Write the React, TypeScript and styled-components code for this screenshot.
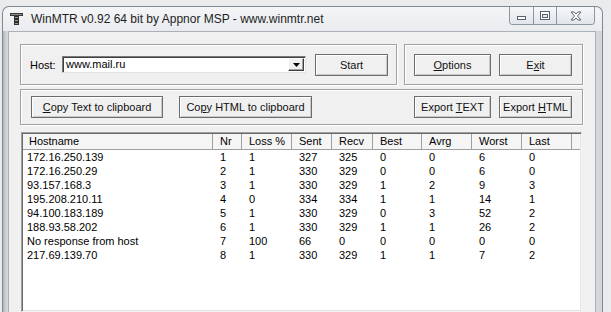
import React from "react";
import styled, { createGlobalStyle } from "styled-components";

const GlobalStyle = createGlobalStyle`
  html, body {
    margin: 0;
    padding: 0;
    background: #e9ebed;
    overflow: hidden;
  }
  body {
    font-family: "Liberation Sans", Arial, sans-serif;
    font-size: 11px;
    color: #000;
  }
  * {
    box-sizing: border-box;
  }
`;

const Window = styled.div`
  margin: 6px 0 0 2px;
  width: 601px;
  height: 306px;
  border: 1px solid #7f8994;
  border-bottom: none;
  border-radius: 7px 7px 0 0;
  background: linear-gradient(#f4f5f7, #e6e9ec 30px);
  display: flex;
  flex-direction: column;
  overflow: hidden;
`;

const TitleBar = styled.div`
  height: 24px;
  flex-shrink: 0;
  display: flex;
  align-items: center;
  padding-left: 7px;
`;

const TitleText = styled.span`
  margin-left: 8px;
  font-size: 12px;
  color: #1e1e1e;
`;

const Caption = styled.div`
  display: flex;
  align-self: flex-start;
  margin-left: auto;
  margin-right: 7px;
  border: 1px solid #8b96a3;
  border-top: none;
  border-radius: 0 0 4px 4px;
  overflow: hidden;
`;

const CapButton = styled.div<{ $w: number }>`
  width: ${(p) => p.$w}px;
  height: 17px;
  display: flex;
  align-items: center;
  justify-content: center;
  background: linear-gradient(#f6f7f9, #e1e5ea);
  & + & {
    border-left: 1px solid #8b96a3;
  }
`;

const Frame = styled.div`
  flex: 1;
  min-height: 0;
  display: flex;
  padding: 0 6px 0 5px;
  background: linear-gradient(
    to right,
    #b4b6b9 0px,
    #cfd1d4 3px,
    #dcdee1 6px,
    #e3e5e8 50%,
    #d3d5d8 100%
  );
`;

const Client = styled.div`
  flex: 1;
  background: #f0f0f0;
  border: 1px solid #aab1b9;
  border-bottom: none;
  padding: 12px 0 0 11px;
`;

const Row = styled.div<{ $top?: number }>`
  display: flex;
  gap: 7px;
  margin-top: ${(p) => p.$top ?? 0}px;
`;

const Group = styled.div<{ $w: number; $h: number; $pad: number }>`
  width: ${(p) => p.$w}px;
  height: ${(p) => p.$h}px;
  display: flex;
  align-items: center;
  padding-left: ${(p) => p.$pad}px;
  border: 1px solid #a0a0a0;
  box-shadow: inset 1px 1px 0 #fff, 1px 1px 0 #fff;
`;

const Label = styled.span`
  width: 32px;
  font-size: 11px;
`;

const Combo = styled.div`
  width: 244px;
  height: 17px;
  display: flex;
  background: #fff;
  border: 1px solid;
  border-color: #7a7a7a #e3e3e3 #e3e3e3 #7a7a7a;
  box-shadow: inset 1px 1px 0 #404040;
`;

const ComboText = styled.span`
  flex: 1;
  padding: 1px 0 0 3px;
  line-height: 13px;
`;

const DropButton = styled.div`
  width: 16px;
  height: 13px;
  margin: 1px 1px 0 0;
  display: flex;
  align-items: center;
  justify-content: center;
  background: #f0f0f0;
  border: 1px solid;
  border-color: #fff #404040 #404040 #fff;
  box-shadow: inset -1px -1px 0 #a0a0a0;
`;

const Button = styled.button<{ $w: number; $gap?: number }>`
  width: ${(p) => p.$w}px;
  height: 22px;
  margin-left: ${(p) => p.$gap ?? 0}px;
  padding: 0;
  font: 11px "Liberation Sans", Arial, sans-serif;
  color: #111;
  background: #f0f0f0;
  border: 1px solid #6c6c6c;
  border-radius: 0;
  box-shadow: inset 1px 1px 0 #fff, inset -1px -1px 0 #c9c9c9;
  u {
    text-decoration: underline;
  }
`;

const Spacer = styled.div<{ $w?: number }>`
  flex: ${(p) => (p.$w ? `0 0 ${p.$w}px` : "1")};
`;

const List = styled.div`
  margin: 7px 0 0 1px;
  width: 561px;
  height: 180px;
  background: #fff;
  border: 1px solid;
  border-color: #a0a0a0 #f4f4f4 #f4f4f4 #a0a0a0;
  box-shadow: inset 1px 1px 0 #696969, inset -1px -1px 0 #e3e3e3;
  padding: 1px 1px 0 1px;
`;

const cols = "190px 29px 50px 40px 41px 49px 50px 50px 50px 1fr";

const HeaderRow = styled.div`
  display: grid;
  grid-template-columns: ${cols};
  height: 16px;
  background: #f5f5f5;
  border-bottom: 1px solid #a0a0a0;
`;

const HeadCell = styled.div<{ $first?: boolean }>`
  padding-left: ${(p) => (p.$first ? 6 : 7)}px;
  line-height: 15px;
  border-right: 1px solid #a0a0a0;
  white-space: nowrap;
  overflow: hidden;
  &:last-child {
    border-right: none;
  }
`;

const DataRow = styled.div`
  display: grid;
  grid-template-columns: ${cols};
  height: 14px;
  line-height: 14px;
`;

const Cell = styled.div<{ $first?: boolean }>`
  padding-left: ${(p) => (p.$first ? 4 : 7)}px;
  white-space: nowrap;
  overflow: hidden;
`;

const AppIcon = () => (
  <svg width="13" height="12" viewBox="0 0 13 12">
    <rect x="0" y="0" width="13" height="3" fill="#3a3a3a" />
    <rect x="1" y="1" width="11" height="1" fill="#8a8a8a" />
    <rect x="4" y="3" width="5" height="9" fill="#2e2e2e" />
    <rect x="5" y="4" width="3" height="1" fill="#9a9a9a" />
    <rect x="5" y="7" width="3" height="1" fill="#9a9a9a" />
    <rect x="5" y="10" width="3" height="1" fill="#9a9a9a" />
  </svg>
);

const MinIcon = () => (
  <svg width="9" height="8" viewBox="0 0 9 8">
    <rect x="0.5" y="4.5" width="8" height="3" fill="#fff" stroke="#55606c" />
  </svg>
);

const MaxIcon = () => (
  <svg width="10" height="9" viewBox="0 0 10 9">
    <rect x="0.5" y="0.5" width="9" height="8" fill="#fff" stroke="#55606c" />
    <rect x="2.5" y="3.5" width="5" height="3" fill="#e8ebee" stroke="#55606c" />
  </svg>
);

const CloseIcon = () => (
  <svg width="12" height="10" viewBox="0 0 12 10">
    <path
      d="M1 1 L4 1 L6 3 L8 1 L11 1 L7.5 5 L11 9 L8 9 L6 7 L4 9 L1 9 L4.5 5 Z"
      fill="#fff"
      stroke="#55606c"
      strokeWidth="1"
      strokeLinejoin="round"
    />
  </svg>
);

const Arrow = () => (
  <svg width="7" height="4" viewBox="0 0 7 4">
    <path d="M0 0 H7 L3.5 4 Z" fill="#000" />
  </svg>
);

const headers = ["Hostname", "Nr", "Loss %", "Sent", "Recv", "Best", "Avrg", "Worst", "Last"];

const rows: (string | number)[][] = [
  ["172.16.250.139", 1, 1, 327, 325, 0, 0, 6, 0],
  ["172.16.250.29", 2, 1, 330, 329, 0, 0, 6, 0],
  ["93.157.168.3", 3, 1, 330, 329, 1, 2, 9, 3],
  ["195.208.210.11", 4, 0, 334, 334, 1, 1, 14, 1],
  ["94.100.183.189", 5, 1, 330, 329, 0, 3, 52, 2],
  ["188.93.58.202", 6, 1, 330, 329, 1, 1, 26, 2],
  ["No response from host", 7, 100, 66, 0, 0, 0, 0, 0],
  ["217.69.139.70", 8, 1, 330, 329, 1, 1, 7, 2],
];

export default function App() {
  return (
    <>
      <GlobalStyle />
      <Window>
        <TitleBar>
          <AppIcon />
          <TitleText>WinMTR v0.92 64 bit by Appnor MSP - www.winmtr.net</TitleText>
          <Caption>
            <CapButton $w={23}>
              <MinIcon />
            </CapButton>
            <CapButton $w={23}>
              <MaxIcon />
            </CapButton>
            <CapButton $w={38}>
              <CloseIcon />
            </CapButton>
          </Caption>
        </TitleBar>
        <Frame>
          <Client>
            <Row>
              <Group $w={377} $h={41} $pad={9}>
                <Label>Host:</Label>
                <Combo>
                  <ComboText>www.mail.ru</ComboText>
                  <DropButton>
                    <Arrow />
                  </DropButton>
                </Combo>
                <Button $w={73} $gap={9}>
                  Start
                </Button>
              </Group>
              <Group $w={179} $h={41} $pad={9}>
                <Button $w={77}>
                  <u>O</u>ptions
                </Button>
                <Button $w={73} $gap={8}>
                  E<u>x</u>it
                </Button>
              </Group>
            </Row>
            <Row $top={4}>
              <Group $w={563} $h={36} $pad={10}>
                <Button $w={132}>
                  <u>C</u>opy Text to clipboard
                </Button>
                <Button $w={133} $gap={16}>
                  Co<u>p</u>y HTML to clipboard
                </Button>
                <Spacer />
                <Button $w={77}>
                  Export <u>T</u>EXT
                </Button>
                <Button $w={73} $gap={8}>
                  Export <u>H</u>TML
                </Button>
                <Spacer $w={10} />
              </Group>
            </Row>
            <List>
              <HeaderRow>
                {headers.map((h, i) => (
                  <HeadCell key={h} $first={i === 0}>
                    {h}
                  </HeadCell>
                ))}
                <HeadCell />
              </HeaderRow>
              {rows.map((r) => (
                <DataRow key={r[1]}>
                  {r.map((v, i) => (
                    <Cell key={i} $first={i === 0}>
                      {v}
                    </Cell>
                  ))}
                </DataRow>
              ))}
            </List>
          </Client>
        </Frame>
      </Window>
    </>
  );
}
